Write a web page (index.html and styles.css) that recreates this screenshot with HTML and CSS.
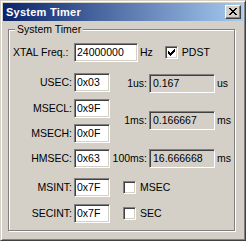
FILE: index.html
```html
<!DOCTYPE html>
<html>
<head>
<meta charset="utf-8">
<link rel="stylesheet" href="styles.css">
</head>
<body>
<div class="window">
  <div class="titlebar">
    <span class="title">System Timer</span>
    <span class="close">
      <svg width="8" height="7" viewBox="0 0 8 7" shape-rendering="crispEdges">
        <path d="M0 0h2v1h-2zM6 0h2v1h-2zM1 1h2v1h-2zM5 1h2v1h-2zM2 2h4v1h-4zM3 3h2v1h-2zM2 4h4v1h-4zM1 5h2v1h-2zM5 5h2v1h-2zM0 6h2v1h-2zM6 6h2v1h-2z" fill="#000"/>
      </svg>
    </span>
  </div>
  <div class="client">
    <div class="group">
      <span class="legend">System Timer</span>
      <div class="grid">
        <span class="lbl lbl-left row1">XTAL Freq.:</span>
        <div class="xtal-rest row1">
          <span class="edit edit-wide">24000000</span>
          <span class="hz">Hz</span>
          <span class="check check-pdst">
            <svg width="7" height="7" viewBox="0 0 7 7" shape-rendering="crispEdges">
              <path d="M6 0h1v1h-1zM5 1h2v1h-2zM0 2h1v1h-1zM4 2h3v1h-3zM0 3h2v1h-2zM3 3h3v1h-3zM0 4h5v1h-5zM1 5h3v1h-3zM2 6h1v1h-1z" fill="#000"/>
            </svg>
          </span>
          <span class="clabel">PDST</span>
        </div>

        <span class="lbl row2">USEC:</span>
        <span class="edit row2">0x03</span>
        <span class="mid row2">1us:</span>
        <span class="ro row2 ro-first">0.167</span>
        <span class="unit row2">us</span>

        <span class="lbl row3">MSECL:</span>
        <span class="edit row3">0x9F</span>

        <span class="lbl row4">MSECH:</span>
        <span class="edit row4">0x0F</span>

        <span class="mid span34">1ms:</span>
        <span class="ro span34">0.166667</span>
        <span class="unit span34">ms</span>

        <span class="lbl row5">HMSEC:</span>
        <span class="edit row5">0x63</span>
        <span class="mid row5">100ms:</span>
        <span class="ro row5">16.666668</span>
        <span class="unit row5">ms</span>

        <span class="lbl row6">MSINT:</span>
        <span class="edit row6">0x7F</span>
        <div class="checkrow row6"><span class="check"></span><span class="clabel">MSEC</span></div>

        <span class="lbl row7">SECINT:</span>
        <span class="edit row7">0x7F</span>
        <div class="checkrow row7"><span class="check"></span><span class="clabel">SEC</span></div>
      </div>
    </div>
  </div>
</div>
</body>
</html>
```
FILE: styles.css
```css
html, body {
  margin: 0;
  padding: 0;
  background: #d4d0c8;
}
body {
  font-family: "Liberation Sans", Arial, sans-serif;
  font-size: 10.5px;
  color: #000;
}
.window {
  width: 246px;
  height: 241px;
  box-sizing: border-box;
  border: 1px solid;
  border-color: #d4d0c8 #404040 #404040 #d4d0c8;
  box-shadow: inset 1px 1px 0 #fff, inset -1px -1px 0 #808080;
  padding: 2px;
  background: #d4d0c8;
  display: flex;
  flex-direction: column;
}
.titlebar {
  height: 18px;
  flex: none;
  margin-bottom: 1px;
  background: linear-gradient(to right, #0a246a, #a6caf0);
  display: flex;
  align-items: center;
  justify-content: space-between;
  padding-left: 3px;
  padding-right: 2px;
}
.title {
  color: #fff;
  font-weight: bold;
  font-size: 11px;
  letter-spacing: 0.25px;
  line-height: 18px;
}
.close {
  width: 16px;
  height: 14px;
  box-sizing: border-box;
  background: #d4d0c8;
  border: 1px solid;
  border-color: #fff #404040 #404040 #fff;
  box-shadow: inset -1px -1px 0 #808080;
  display: flex;
  align-items: center;
  justify-content: center;
  padding: 0 1px 1px 0;
}
.close svg { display: block; }
.client {
  flex: 1;
  display: flex;
  flex-direction: column;
  padding: 7px 8px 7px 5px;
}
.group {
  flex: 1;
  position: relative;
  border: 1px solid #808080;
  box-shadow: inset 1px 1px 0 #fff, 1px 1px 0 #fff;
  padding-top: 13px;
}
.legend {
  position: absolute;
  top: -7px;
  left: 6px;
  padding: 0 2px;
  background: #d4d0c8;
  line-height: 13px;
}
.grid {
  display: grid;
  grid-template-columns: 65px 36px 39px 66px auto;
  grid-template-rows: 30px 26px 25px 25px 29px 26px 19px;
  align-items: start;
}
.row1 { grid-row: 1; }
.row2 { grid-row: 2; }
.row3 { grid-row: 3; }
.row4 { grid-row: 4; }
.row5 { grid-row: 5; }
.row6 { grid-row: 6; }
.row7 { grid-row: 7; }
.span34 { grid-row: 3 / span 2; margin-top: 12px; }

.lbl {
  grid-column: 1;
  text-align: right;
  padding-right: 2px;
  line-height: 19px;
  white-space: nowrap;
}
.lbl-left {
  text-align: left;
  padding-left: 4px;
}
.edit, .ro {
  box-sizing: border-box;
  height: 19px;
  border: 1px solid;
  border-color: #808080 #fff #fff #808080;
  box-shadow: inset 1px 1px 0 #404040, inset -1px -1px 0 #d4d0c8;
  padding: 1px 2px 1px 2px;
  line-height: 15px;
  white-space: nowrap;
  overflow: hidden;
}
.edit {
  grid-column: 2;
  width: 36px;
  background: #fff;
}
.edit-wide {
  width: 64px;
}
.ro {
  grid-column: 4;
  width: 66px;
  background: #d4d0c8;
  padding-left: 3px;
}
.ro-first { margin-top: 1px; }
.mid {
  grid-column: 3;
  text-align: right;
  padding-right: 2px;
  line-height: 19px;
  white-space: nowrap;
}
.row2.mid, .row2.unit { margin-top: 1px; }
.unit {
  grid-column: 5;
  padding-left: 2px;
  line-height: 19px;
}
.xtal-rest {
  grid-column: 2 / -1;
  display: flex;
  align-items: center;
}
.hz {
  margin-left: 2px;
  line-height: 19px;
}
.check {
  width: 13px;
  height: 13px;
  box-sizing: border-box;
  border: 1px solid;
  border-color: #808080 #fff #fff #808080;
  box-shadow: inset 1px 1px 0 #404040, inset -1px -1px 0 #d4d0c8;
  background: #fff;
  display: flex;
  align-items: center;
  justify-content: center;
  flex: none;
}
.check svg { display: block; }
.check-pdst {
  margin-left: 12px;
}
.clabel {
  margin-left: 4px;
  line-height: 19px;
}
.checkrow {
  grid-column: 3 / -1;
  display: flex;
  align-items: center;
  height: 19px;
  padding-left: 13px;
}
```
